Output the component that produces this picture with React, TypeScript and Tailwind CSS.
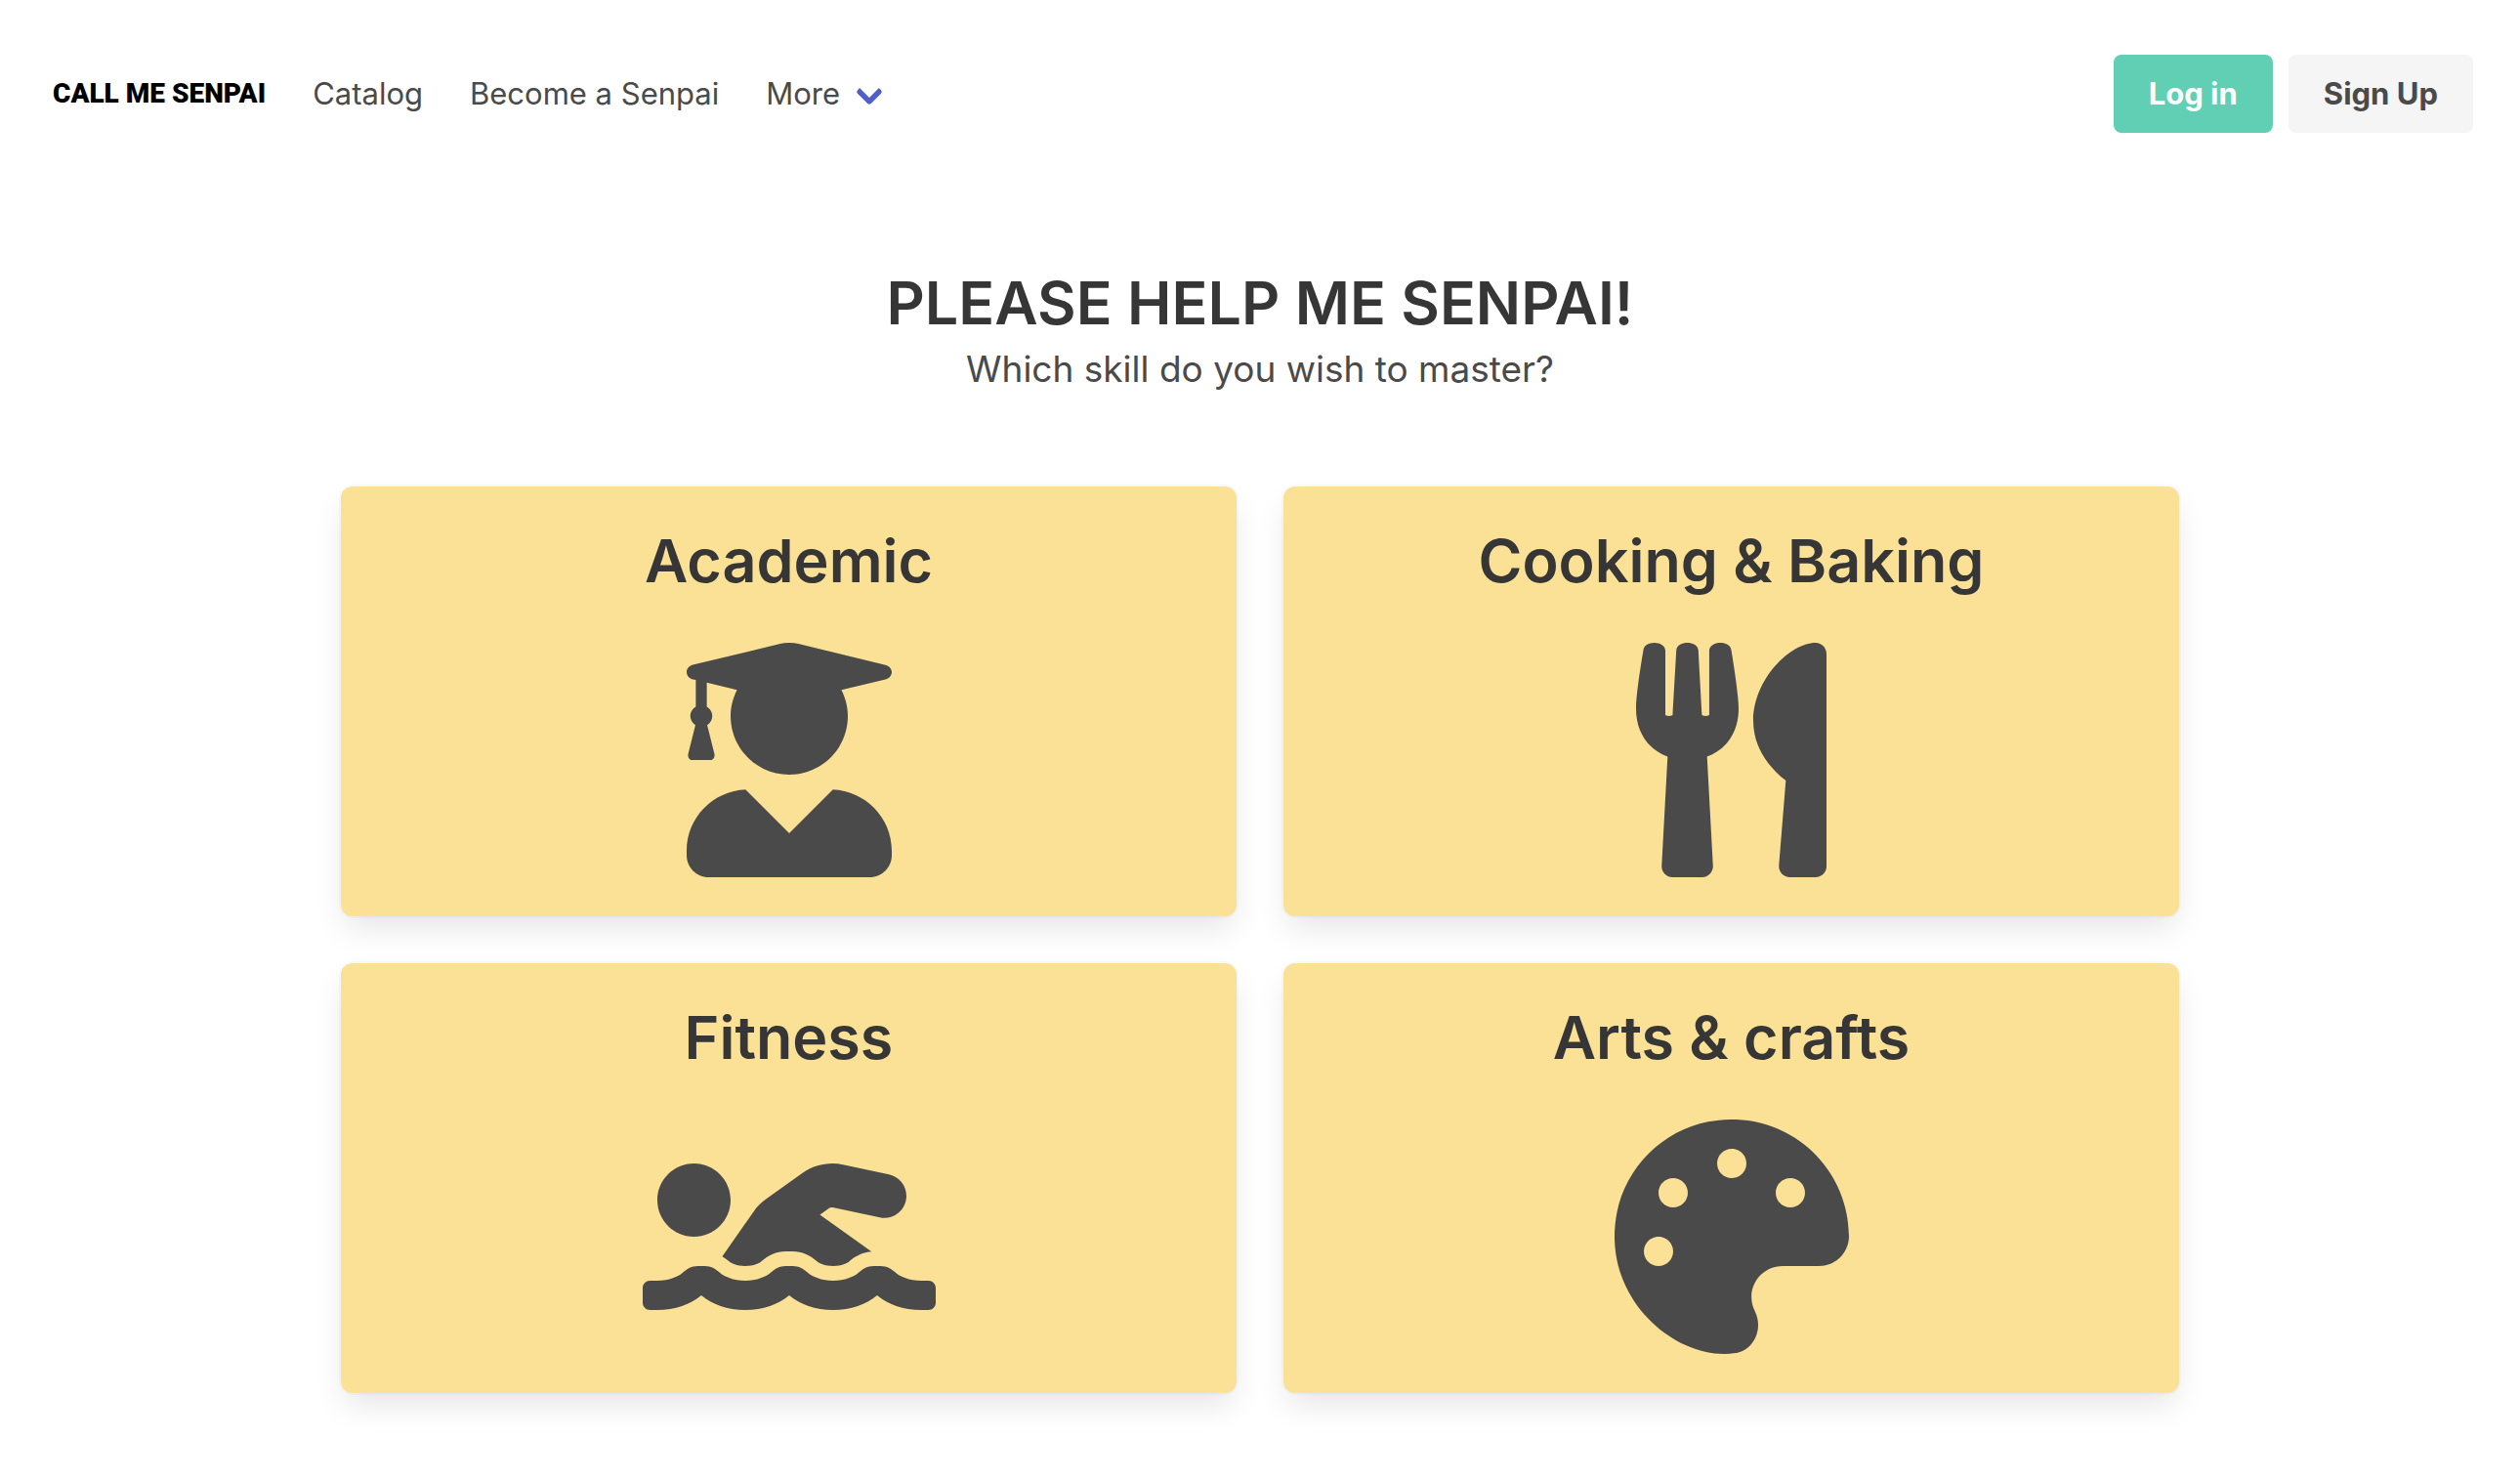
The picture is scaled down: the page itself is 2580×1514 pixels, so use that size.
import type { IconType } from "react-icons";
import { FaPalette, FaSwimmer, FaUserGraduate, FaUtensils } from "react-icons/fa";

type Category = { name: string; icon: IconType; iconClass: string };

const categories: Category[] = [
  { name: "Academic", icon: FaUserGraduate, iconClass: "h-[240px] w-[210px]" },
  { name: "Cooking & Baking", icon: FaUtensils, iconClass: "h-[240px] w-[195px]" },
  { name: "Fitness", icon: FaSwimmer, iconClass: "h-[240px] w-[300px]" },
  { name: "Arts & crafts", icon: FaPalette, iconClass: "h-[240px] w-[240px]" },
];

function Navbar() {
  return (
    <header className="flex items-center justify-between px-12 py-14">
      <nav className="flex items-center gap-12" aria-label="Main">
        <a href="#home" className="pl-1.5 font-['Roboto',sans-serif] text-[28px] leading-12 font-black text-black">
          CALL ME SENPAI
        </a>
        <a href="#catalog">Catalog</a>
        <a href="#become">Become a Senpai</a>
        <button type="button" className="flex items-center gap-5">
          More
          <span className="mb-1 size-5 -rotate-45 rounded-sm border-b-6 border-l-6 border-[#4f5fc5]" />
        </button>
      </nav>
      <div className="flex gap-4 font-bold">
        <button type="button" className="h-20 rounded-lg bg-[#61cfb4] px-9 text-white">
          Log in
        </button>
        <button type="button" className="h-20 rounded-lg bg-[#f5f5f5] px-9">
          Sign Up
        </button>
      </div>
    </header>
  );
}

function CategoryCard({ name, icon: Icon, iconClass }: Category) {
  return (
    <a
      href="#category"
      className="flex flex-col items-center gap-12 rounded-xl bg-[#fbe196] p-10 shadow-[0_16px_32px_-4px_rgba(10,10,10,0.1),0_0_0_2px_rgba(10,10,10,0.02)]"
    >
      <h2 className="text-[61px] leading-[72px] font-semibold text-[#363636]">{name}</h2>
      <Icon className={iconClass} />
    </a>
  );
}

export default function App() {
  return (
    <div className="min-h-screen bg-white font-['Inter',sans-serif] text-[31px] leading-12 text-[#4a4a4a]">
      <Navbar />
      <main className="px-12 pt-[82px] pb-20">
        <div className="text-center">
          <h1 className="text-[61px] leading-[72px] font-semibold text-[#363636]">PLEASE HELP ME SENPAI!</h1>
          <p className="text-[37px] leading-16">Which skill do you wish to master?</p>
        </div>
        <div className="mx-auto mt-[88px] grid max-w-[1882px] grid-cols-2 gap-12">
          {categories.map((category) => (
            <CategoryCard key={category.name} {...category} />
          ))}
        </div>
      </main>
    </div>
  );
}
